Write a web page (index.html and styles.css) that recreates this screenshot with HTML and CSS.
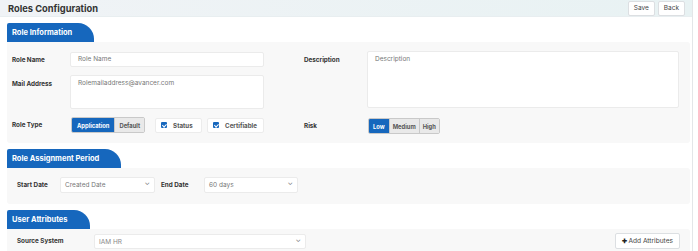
FILE: index.html
```html
<!DOCTYPE html>
<html lang="en">
<head>
    <meta charset="UTF-8">
    <title>Roles Configuration</title>
    <link rel="stylesheet" href="styles.css">
</head>
<body>
    <div class="page">
        <header class="topbar">
            <h1>Roles Configuration</h1>
            <div class="top-actions">
                <button class="btn-light">Save</button>
                <button class="btn-light">Back</button>
            </div>
        </header>

        <section class="section">
            <div class="tab">Role Information</div>
            <div class="panel info-panel">
                <div class="col">
                    <div class="row">
                        <label class="lbl">Role Name</label>
                        <div class="field input-sm">Role Name</div>
                    </div>
                    <div class="row top">
                        <label class="lbl">Mail Address</label>
                        <div class="field area-sm">Rolemailaddress@avancer.com</div>
                    </div>
                    <div class="row">
                        <label class="lbl">Role Type</label>
                        <div class="seg">
                            <span class="seg-item active">Application</span>
                            <span class="seg-item">Default</span>
                        </div>
                        <div class="check status"><span class="box"></span>Status</div>
                        <div class="check cert"><span class="box"></span>Certifiable</div>
                    </div>
                </div>
                <div class="col right">
                    <div class="row top">
                        <label class="lbl lbl-wide">Description</label>
                        <div class="field area-lg">Description</div>
                    </div>
                    <div class="row">
                        <label class="lbl lbl-wide">Risk</label>
                        <div class="seg risk">
                            <span class="seg-item active">Low</span>
                            <span class="seg-item">Medium</span>
                            <span class="seg-item">High</span>
                        </div>
                    </div>
                </div>
            </div>
        </section>

        <section class="section">
            <div class="tab">Role Assignment Period</div>
            <div class="panel period-panel">
                <label class="lbl">Start Date</label>
                <div class="field select start">Created Date<span class="caret">&#8964;</span></div>
                <label class="lbl end-lbl">End Date</label>
                <div class="field select end">60 days<span class="caret">&#8964;</span></div>
            </div>
        </section>

        <section class="section">
            <div class="tab">User Attributes</div>
            <div class="panel attr-panel">
                <label class="lbl src-lbl">Source System</label>
                <div class="field select source">IAM HR<span class="caret">&#8964;</span></div>
                <button class="btn-light add-btn"><b>&#10010;</b> Add Attributes</button>
            </div>
        </section>
    </div>
</body>
</html>
```

FILE: styles.css
```css
* {
    box-sizing: border-box;
}
body {
    margin: 0;
    font-family: 'Inter', 'Noto Sans', sans-serif;
    color: #333;
    background-color: #fff;
}
.page {
    width: 693px;
    height: 251px;
    border-right: 1px solid #e3e6e8;
    overflow: hidden;
}
.topbar {
    height: 17px;
    display: flex;
    align-items: center;
    justify-content: space-between;
    padding: 0 7px 0 8px;
    background: linear-gradient(to right, #f0f3f6, #e8f2f3);
    border-bottom: 1px solid #e8eef0;
}
.topbar h1 {
    margin: 0;
    font-size: 9.3px;
    font-weight: 700;
    color: #333;
}
.top-actions {
    display: flex;
    gap: 3px;
}
.btn-light {
    font-family: inherit;
    background-color: #fff;
    border: 1px solid #dcdfe2;
    border-radius: 2px;
    font-size: 6.5px;
    color: #444;
    height: 15px;
    padding: 0 5px;
    cursor: pointer;
}
.section {
    margin: 6px 0 0 7px;
    width: 683px;
}
.tab {
    display: flex;
    align-items: center;
    width: max-content;
    height: 19px;
    padding: 0 22px 0 5px;
    background-color: #1667bd;
    color: #fff;
    font-size: 7.5px;
    font-weight: 700;
    border-radius: 2px 16px 0 0;
}
.panel {
    background-color: #f8f8f8;
    border-radius: 0 3px 3px 3px;
}
.info-panel {
    display: flex;
    height: 101px;
    padding: 10px 0 0 5px;
}
.col {
    width: 292px;
}
.col.right {
    width: 380px;
}
.row {
    display: flex;
    align-items: center;
    margin-bottom: 8px;
}
.row.top {
    align-items: flex-start;
}
.lbl {
    font-size: 6.3px;
    font-weight: 700;
    color: #333;
    width: 58px;
    flex-shrink: 0;
}
.row.top .lbl {
    padding-top: 5px;
}
.lbl-wide {
    width: 63px;
}
.field {
    background-color: #fff;
    border: 1px solid #ebebeb;
    border-radius: 2px;
    font-size: 6.5px;
    color: #777;
    padding: 0 7px;
}
.input-sm {
    width: 194px;
    height: 15px;
    line-height: 13px;
}
.area-sm {
    width: 194px;
    height: 34px;
    padding-top: 3px;
}
.area-lg {
    width: 312px;
    height: 57px;
    padding-top: 3px;
}
.seg {
    display: flex;
    height: 16px;
    border: 1px solid #c9c9c9;
    border-radius: 2px;
    overflow: hidden;
    margin-left: 1px;
}
.seg-item {
    display: flex;
    align-items: center;
    padding: 0 4px;
    background-color: #e9e9e9;
    border-left: 1px solid #c9c9c9;
    font-size: 5.8px;
    font-weight: 700;
    color: #555;
}
.seg-item.active {
    background-color: #1667bd;
    color: #fff;
    border-left: none;
}
.seg .seg-item:first-child {
    padding: 0 5px;
}
.check {
    display: flex;
    align-items: center;
    height: 15px;
    background-color: #fff;
    border: 1px solid #ececec;
    border-radius: 2px;
    font-size: 6.2px;
    font-weight: 700;
    color: #555;
    padding-left: 5px;
}
.check.status {
    width: 47px;
    margin-left: 10px;
}
.check.cert {
    width: 57px;
    margin-left: 5px;
}
.box {
    width: 6px;
    height: 6px;
    border-radius: 1px;
    background-color: #1667bd;
    margin-right: 6px;
    position: relative;
}
.box::after {
    content: '';
    position: absolute;
    left: 1.8px;
    top: 0.5px;
    width: 1.5px;
    height: 3px;
    border: solid #fff;
    border-width: 0 1px 1px 0;
    transform: rotate(45deg);
}
.right .row.top {
    margin-top: -1px;
    margin-bottom: 10px;
}
.right .row.top .lbl {
    padding-top: 5px;
}
.risk .seg-item {
    font-size: 5.8px;
    padding: 0 3px;
}
.risk .seg-item:first-child {
    padding: 0 4px;
}
.period-panel {
    display: flex;
    align-items: center;
    height: 36px;
    padding: 0 0 2px 10px;
}
.period-panel .lbl {
    width: 43px;
}
.select {
    position: relative;
    height: 16px;
    line-height: 14px;
    padding-left: 4px;
}
.caret {
    position: absolute;
    right: 4px;
    top: -2px;
    font-size: 7px;
    color: #777;
}
.select.start {
    width: 95px;
}
.period-panel .end-lbl {
    margin-left: 6px;
}
.select.end {
    width: 94px;
}
.attr-panel {
    display: flex;
    align-items: center;
    height: 30px;
    padding: 0 10px 6px 10px;
}
.attr-panel .src-lbl {
    width: 77px;
}
.select.source {
    width: 212px;
    height: 15px;
    color: #888;
}
.add-btn {
    margin-left: auto;
    height: 16px;
    font-size: 6.6px;
    padding: 0 6px;
}
.add-btn b {
    font-size: 6px;
    color: #222;
}
```
